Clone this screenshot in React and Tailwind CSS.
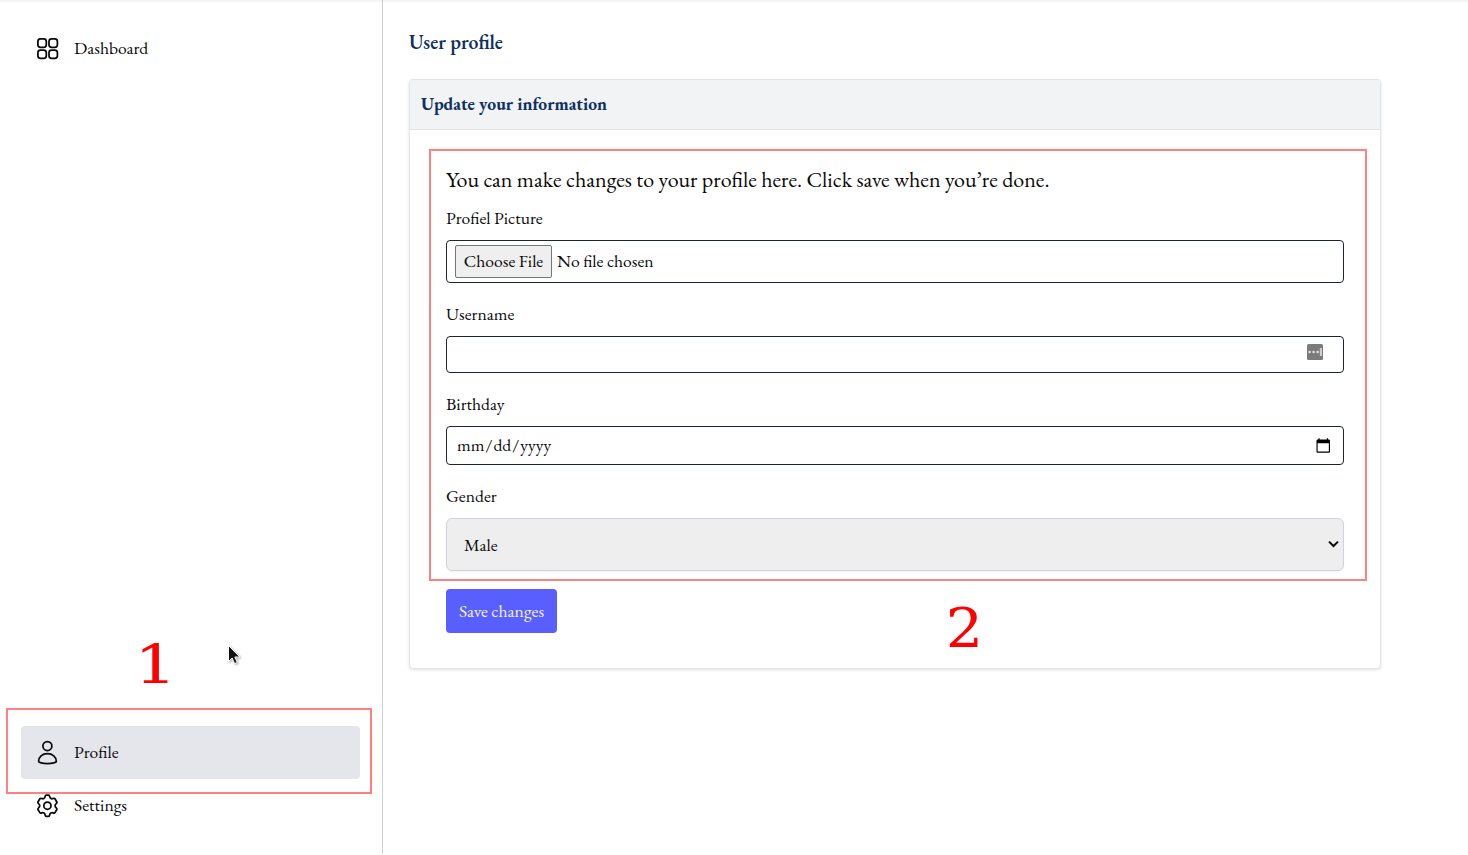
function DashboardIcon() {
  return (
    <svg width="22" height="22" viewBox="0 0 22 22" fill="none" stroke="#0a0a0a" strokeWidth="1.75">
      <rect x="0.9" y="0.9" width="8.400" height="8.400" rx="2.6" />
      <rect x="12" y="0.9" width="8.400" height="8.400" rx="2.6" />
      <rect x="0.9" y="12" width="8.400" height="8.400" rx="2.6" />
      <rect x="12" y="12" width="8.400" height="8.400" rx="2.6" />
    </svg>
  );
}

function UserIcon() {
  return (
    <svg width="22" height="26" viewBox="0 0 22 26" fill="none" stroke="#0a0a0a" strokeWidth="1.75">
      <circle cx="10.4" cy="6" r="4.5" />
      <path d="M1.600 21.200C1.600 17 5.300 13.600 10.400 13.600S19.300 17 19.300 21.200C19.300 22.400 15.600 23.600 10.400 23.600S1.600 22.400 1.600 21.200Z" strokeLinejoin="round" />
    </svg>
  );
}

function GearIcon() {
  return (
    <svg width="22" height="24" viewBox="0.5 0.3 22 24" fill="none" stroke="#0a0a0a" strokeWidth="1.75" strokeLinejoin="round">
      <circle cx="10.9" cy="12" r="3.6" />
      <path d="M8.6 2.8C8.7 1.9 9.2 1.4 10 1.4H11.8C12.6 1.4 13.1 1.9 13.2 2.8C13.4 4.6 15 5.5 16.6 4.8C17.5 4.4 18.2 4.6 18.6 5.3L20.2 8C20.6 8.7 20.4 9.3 19.7 9.9C18.2 11 18.2 13 19.7 14.1C20.4 14.7 20.6 15.3 20.2 16L18.6 18.7C18.2 19.4 17.5 19.6 16.6 19.2C15 18.5 13.4 19.4 13.2 21.2C13.1 22.1 12.6 22.6 11.8 22.6H10C9.2 22.6 8.7 22.1 8.6 21.2C8.4 19.4 6.8 18.5 5.2 19.2C4.3 19.6 3.6 19.4 3.2 18.7L1.6 16C1.2 15.3 1.4 14.7 2.1 14.1C3.6 13 3.6 11 2.1 9.9C1.4 9.3 1.2 8.7 1.6 8L3.2 5.3C3.6 4.6 4.3 4.4 5.2 4.8C6.8 5.5 8.4 4.6 8.6 2.8Z" />
    </svg>
  );
}

function NavItem({ icon, active, children }) {
  return (
    <a className={`flex h-[53px] items-center gap-[15px] rounded pl-4 ${active ? "bg-[#e5e6eb]" : ""}`}>
      <span className="flex w-[22px] shrink-0 justify-center">{icon}</span>
      <span className="pb-0.5">{children}</span>
    </a>
  );
}

export default function App() {
  return (
    <div className="relative flex h-[855px] w-[1468px] overflow-hidden bg-white font-['EB_Garamond','Liberation_Serif',serif] text-[17.6px] leading-6 text-[#0a0a0a]">
      <aside className="flex h-[854px] w-[383px] shrink-0 flex-col justify-between border-r border-[#d1d2da] pt-[22px] pr-[22px] pb-[22px] pl-[21px]">
        <nav>
          <NavItem icon={<DashboardIcon />}>Dashboard</NavItem>
        </nav>
        <nav>
          <NavItem icon={<UserIcon />} active>Profile</NavItem>
          <NavItem icon={<GearIcon />}>Settings</NavItem>
        </nav>
      </aside>

      <main className="flex-1 pt-[28px] pl-[26px]">
        <h1 className="text-[19.8px] leading-[28px] font-semibold text-[#0f3061]">User profile</h1>
        <section className="mt-[23px] h-[590px] w-[972px] overflow-hidden rounded border border-[#e4e5ea] bg-white shadow-[0_1px_3px_rgba(0,0,0,0.12)]">
          <header className="flex h-[50px] items-center border-b border-[#e2e4ea] bg-[#f2f3f5] pb-0.5 pl-[11px]">
            <h2 className="font-bold text-[#0f3061]">Update your information</h2>
          </header>
          <form className="flex flex-col items-start px-9 pt-[35px]">
            <p className="h-[29px] text-[22px] leading-[29px]">You can make changes to your profile here. Click save when you’re done.</p>
            <label className="mt-[12px]">Profiel Picture</label>
            <div className="mt-[10px] flex h-[43px] w-[898px] items-center rounded border border-[#1e2438] pl-2">
              <span className="flex h-[33px] w-[97px] items-center justify-center rounded-[2px] border border-[#767676] bg-[#efefef] pb-0.5">Choose File</span>
              <span className="ml-[5px] pb-0.5">No file chosen</span>
            </div>
            <label className="mt-[19px]">Username</label>
            <div className="mt-[10px] flex h-[37px] w-[898px] justify-end rounded border border-[#1e2438] pt-[7px] pr-5">
              <svg width="16" height="16" viewBox="0 0 16 16">
                <rect width="16" height="16" rx="1.5" fill="#7b7b7b" />
                <circle cx="2.6" cy="8" r="1.2" fill="#e5e5e5" />
                <circle cx="6.6" cy="8" r="1.2" fill="#e5e5e5" />
                <circle cx="10.6" cy="8" r="1.2" fill="#e5e5e5" />
                <rect x="12.8" y="4" width="2.2" height="8" rx="0.4" fill="#cfcfcf" />
              </svg>
            </div>
            <label className="mt-[19px]">Birthday</label>
            <div className="mt-[10px] flex h-[39px] w-[898px] items-center justify-between rounded border border-[#1e2438] pr-[13px] pl-[9px]">
              <span className="flex pb-0.5">
                <span className="px-px">mm</span>/<span className="px-px">dd</span>/<span className="px-px">yyyy</span>
              </span>
              <svg width="14" height="16" viewBox="-0.5 0 14.5 16">
                <path d="M2 0h1.3v1.3h7.4V0H12v1.3h.7c.7 0 1.3.6 1.3 1.3v11c0 .8-.6 1.4-1.3 1.4H1.3C.6 15 0 14.400 0 13.600v-11c0-.7.6-1.300 1.300-1.300H2zM1.200 5.200v8.600h11.600V5.200z" fill="#000" fillRule="evenodd" />
              </svg>
            </div>
            <label className="mt-[19px]">Gender</label>
            <div className="mt-[10px] flex h-[53px] w-[898px] items-center justify-between rounded-md border border-[#d1d3dc] bg-[#eeeeee] pr-[4px] pl-[17px] shadow-[0_1px_2px_rgba(0,0,0,0.05)]">
              <span>Male</span>
              <svg width="11" height="8" viewBox="0 0 11 8" className="-mt-px" fill="none" stroke="#0a0a0a" strokeWidth="2">
                <path d="M1 1.600 5.500 6 10 1.600" />
              </svg>
            </div>
            <button className="mt-[18px] flex h-[44px] w-[111px] items-center justify-center rounded bg-[#595eff] text-[#f3f3ff]" type="button">Save changes</button>
          </form>
        </section>
      </main>

      <div className="absolute top-0 left-0 h-[3px] w-full bg-gradient-to-b from-black/6 to-transparent" />
      <div className="absolute top-[708px] left-[6px] h-[86px] w-[366px] border-2 border-[#ff8080]" />
      <div className="absolute top-[149px] left-[429px] h-[432px] w-[938px] border-2 border-[#ff8080]" />
      <div className="absolute top-[635px] left-[138px] scale-x-[1.22] font-['DejaVu_Serif',serif] text-[55px] leading-[60px] text-[#ff0000]">1</div>
      <div className="absolute top-[598px] left-[947px] scale-x-[1.07] font-['DejaVu_Serif',serif] text-[55px] leading-[60px] text-[#ff0000]">2</div>
      <svg className="absolute top-[644px] left-[227px] drop-shadow-[1px_1px_1px_rgba(0,0,0,0.35)]" width="15" height="22" viewBox="0 0 15 22">
        <path d="M1.500 1.500v16l3.600-3.500 2.500 5.600 2.700-1.200-2.500-5.400h5z" fill="#111" stroke="#fff" strokeWidth="1" />
      </svg>
    </div>
  );
}
